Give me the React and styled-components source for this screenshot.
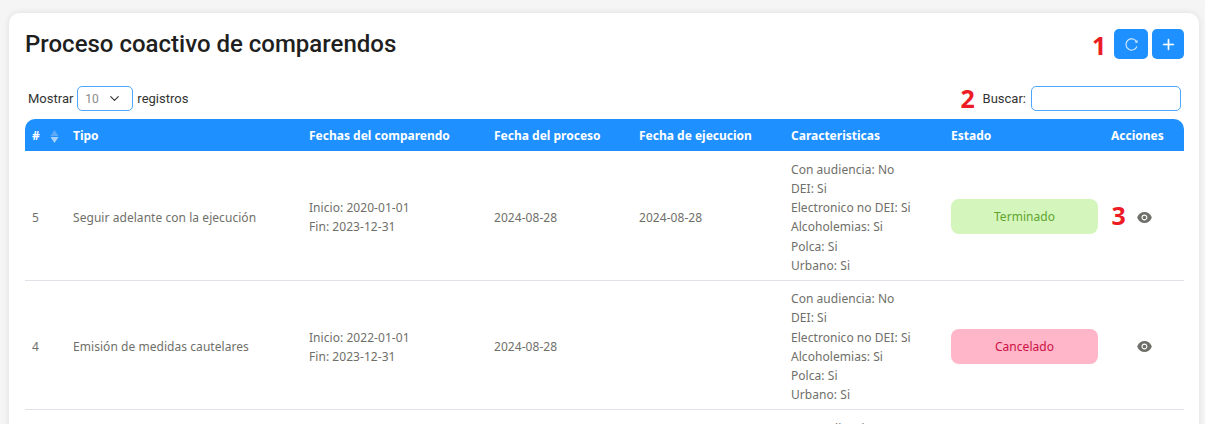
import React from "react";
import styled, { createGlobalStyle } from "styled-components";
import { ChevronDown } from "lucide-react";
import { AiFillEye, AiOutlinePlus, AiOutlineReload } from "react-icons/ai";

const rows = [
  {
    id: 5,
    tipo: "Seguir adelante con la ejecución",
    inicio: "2020-01-01",
    fin: "2023-12-31",
    proceso: "2024-08-28",
    ejecucion: "2024-08-28",
    audiencia: "No",
    estado: "Terminado",
  },
  {
    id: 4,
    tipo: "Emisión de medidas cautelares",
    inicio: "2022-01-01",
    fin: "2023-12-31",
    proceso: "2024-08-28",
    ejecucion: "",
    audiencia: "No",
    estado: "Cancelado",
  },
  {
    id: 3,
    tipo: "Emisión de medidas cautelares",
    inicio: "2022-01-01",
    fin: "2023-12-31",
    proceso: "2024-08-28",
    ejecucion: "",
    audiencia: "No",
    estado: "Cancelado",
  },
];

const headers = [
  ["#", 41],
  ["Tipo", 236],
  ["Fechas del comparendo", 185],
  ["Fecha del proceso", 145],
  ["Fecha de ejecucion", 152],
  ["Caracteristicas", 160],
  ["Estado", 160],
  ["Acciones", 80],
];

function App() {
  return (
    <>
      <GlobalStyle />
      <Card>
        <TopBar>
          <Title>Proceso coactivo de comparendos</Title>
          <Actions>
            <Mark $top={-2} $left={-22}>1</Mark>
            <IconButton $width={34}>
              <AiOutlineReload size={15} color="#d5e9ff" />
            </IconButton>
            <IconButton $width={32}>
              <AiOutlinePlus size={15} style={{ strokeWidth: 40 }} />
            </IconButton>
          </Actions>
        </TopBar>
        <Filters>
          <ShowBox>
            Mostrar
            <FakeSelect>
              10
              <ChevronDown size={15} strokeWidth={1.8} color="#333" />
            </FakeSelect>
            registros
          </ShowBox>
          <SearchBox>
            <Mark $top={-6} $left={-22}>2</Mark>
            Buscar:
            <SearchInput />
          </SearchBox>
        </Filters>
        <Table>
          <colgroup>
            {headers.map(([label, width]) => (
              <col key={label} width={width} />
            ))}
          </colgroup>
          <thead>
            <tr>
              {headers.map(([label], index) => (
                <Th key={label}>
                  {label}
                  {index === 0 && (
                    <SortIcon width="9" height="13" viewBox="0 0 9 13">
                      <path d="M4.5 0 8.5 6H.5z" fill="#5fa9f5" />
                      <path d="M4.5 13 8.5 7H.5z" fill="#a9d2fb" />
                    </SortIcon>
                  )}
                </Th>
              ))}
            </tr>
          </thead>
          <tbody>
            {rows.map((row, index) => (
              <tr key={row.id}>
                <Td>{row.id}</Td>
                <Td>{row.tipo}</Td>
                <Td>
                  Inicio: {row.inicio}
                  <br />
                  Fin: {row.fin}
                </Td>
                <Td>{row.proceso}</Td>
                <Td>{row.ejecucion}</Td>
                <Td>
                  Con audiencia: {row.audiencia}
                  <br />
                  DEI: Si
                  <br />
                  Electronico no DEI: Si
                  <br />
                  Alcoholemias: Si
                  <br />
                  Polca: Si
                  <br />
                  Urbano: Si
                </Td>
                <Td>
                  <Badge $done={row.estado === "Terminado"}>{row.estado}</Badge>
                </Td>
                <Td>
                  <EyeWrap>
                    {index === 0 && <Mark $top={-12} $left={-24}>3</Mark>}
                    <AiFillEye size={17} color="#6f6f6a" />
                  </EyeWrap>
                </Td>
              </tr>
            ))}
          </tbody>
        </Table>
      </Card>
    </>
  );
}

export default App;

const GlobalStyle = createGlobalStyle`
  html, body {
    height: 100%;
    overflow: hidden;
  }
  body {
    margin: 0;
    background: #f5f5f5;
    font-family: Roboto, "Liberation Sans", sans-serif;
    color: #333;
  }
`;

const Card = styled.div`
  margin: 13px 6px 0 9px;
  padding: 16px 15px 16px 16px;
  background: #fff;
  border-radius: 10px;
  box-shadow: 0 0 6px rgba(0, 0, 0, 0.1);
`;

const TopBar = styled.div`
  display: flex;
  justify-content: space-between;
  align-items: flex-start;
  height: 57px;
`;

const Title = styled.h1`
  margin: 0;
  padding-top: 1px;
  font-size: 24px;
  font-weight: 500;
  line-height: 29px;
  color: #1f1f1f;
`;

const Actions = styled.div`
  position: relative;
  display: flex;
  gap: 4px;
`;

const Mark = styled.span`
  position: absolute;
  top: ${(p) => p.$top}px;
  left: ${(p) => p.$left}px;
  font-family: "Open Sans", sans-serif;
  font-size: 25px;
  font-weight: 700;
  line-height: 36px;
  color: #ed1c24;
`;

const IconButton = styled.button`
  display: flex;
  align-items: center;
  justify-content: center;
  width: ${(p) => p.$width}px;
  height: 30px;
  padding: 0;
  border: none;
  border-radius: 5px;
  background: #1e90ff;
  color: #fff;
`;

const Filters = styled.div`
  display: flex;
  justify-content: space-between;
  align-items: center;
  height: 25px;
  margin-bottom: 8px;
  padding: 0 3px;
  font-size: 13px;
  color: #333;
`;

const ShowBox = styled.div`
  display: flex;
  align-items: center;
  gap: 4px;
`;

const FakeSelect = styled.div`
  display: flex;
  align-items: center;
  justify-content: space-between;
  box-sizing: border-box;
  width: 56px;
  height: 25px;
  padding: 0 10px 0 7px;
  border: 1px solid #4da6ff;
  border-radius: 5px;
  font-size: 12px;
  color: #8a8a8a;
`;

const SearchBox = styled.div`
  position: relative;
  display: flex;
  align-items: center;
  gap: 5px;
  margin-right: -3px;
  font-size: 13px;
`;

const SearchInput = styled.input`
  box-sizing: border-box;
  width: 150px;
  height: 25px;
  margin-right: 3px;
  border: 1px solid #4da6ff;
  border-radius: 5px;
  outline: none;
`;

const Table = styled.table`
  width: 1159px;
  table-layout: fixed;
  border-collapse: separate;
  border-spacing: 0;
  font-family: "Noto Sans", sans-serif;
  font-size: 12px;
  line-height: 19.2px;
`;

const Th = styled.th`
  position: relative;
  height: 32px;
  padding: 1px 7px 0;
  box-sizing: border-box;
  background: #1e90ff;
  color: #fff;
  font-weight: 700;
  text-align: left;
  white-space: nowrap;

  &:first-child {
    border-top-left-radius: 10px;
  }
  &:last-child {
    border-top-right-radius: 10px;
  }
`;

const SortIcon = styled.svg`
  position: absolute;
  top: 11px;
  left: 25px;
`;

const Td = styled.td`
  padding: 8.7px 7px 4.7px;
  border-bottom: 1px solid #e0e2e8;
  color: #6f6f6a;
  letter-spacing: 0.05px;
  vertical-align: middle;
`;

const EyeWrap = styled.div`
  position: relative;
  width: 17px;
  height: 17px;
  margin: 0 auto;
  svg {
    display: block;
  }
`;

const Badge = styled.div`
  display: flex;
  align-items: center;
  justify-content: center;
  height: 35px;
  margin: -1px -1px 0 0;
  border-radius: 8px;
  background: ${(p) => (p.$done ? "#d4f5bc" : "#ffb6c8")};
  color: ${(p) => (p.$done ? "#5fa52e" : "#cc0f44")};
`;
